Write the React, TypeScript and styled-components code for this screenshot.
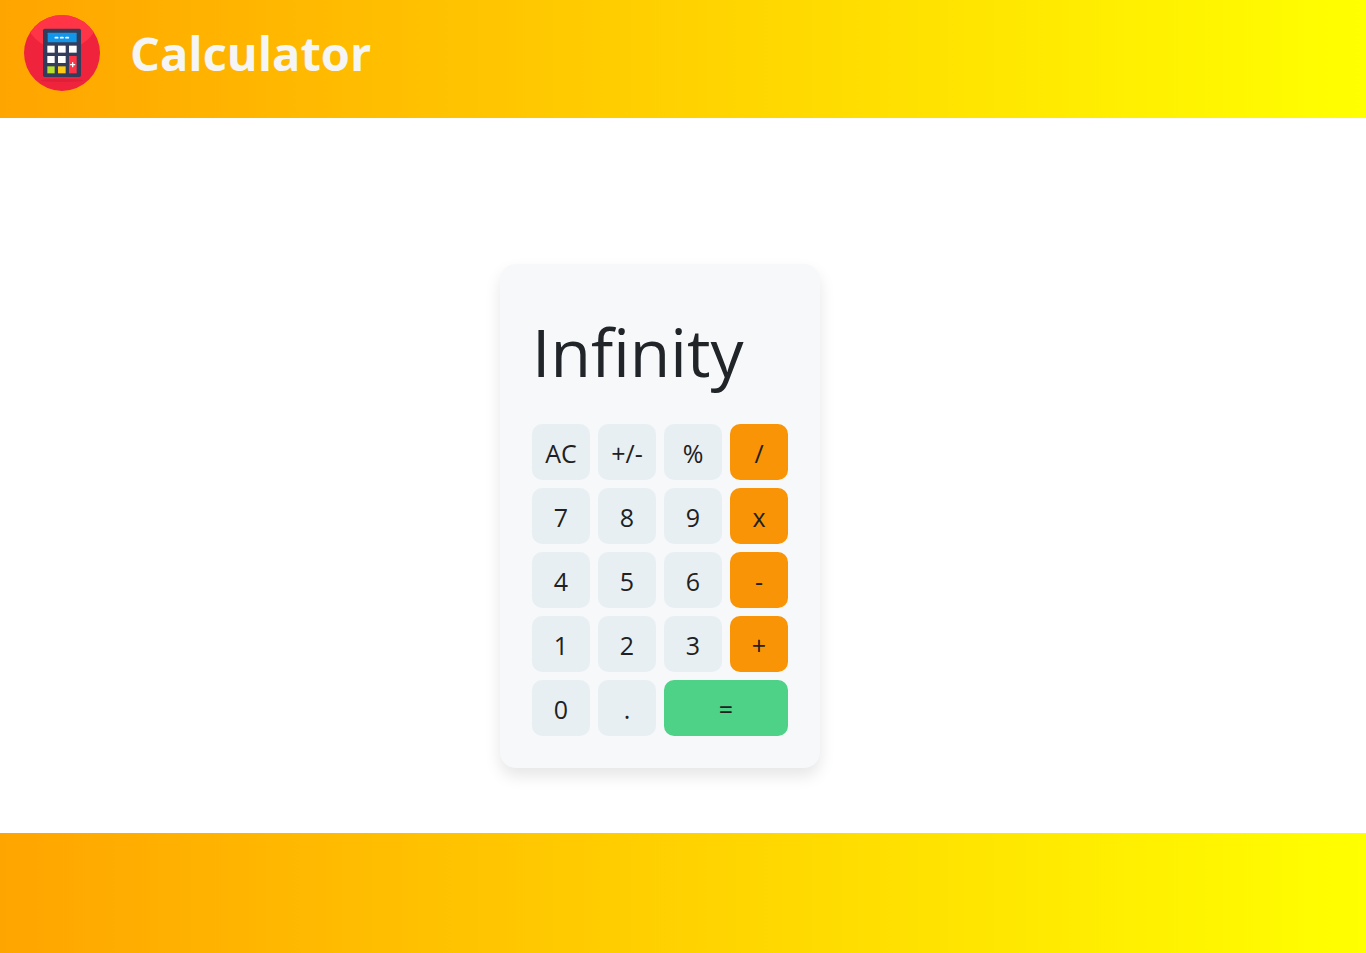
import React, { useState } from 'react';
import styled, { createGlobalStyle } from 'styled-components';

const GlobalStyle = createGlobalStyle`
  *, *::before, *::after { box-sizing: border-box; }
  body {
    margin: 0;
    background: #ffffff;
    color: #212529;
    font-family: 'Segoe UI', 'Open Sans', 'Noto Sans', sans-serif;
  }
`;

const Page = styled.div`
  min-height: 100vh;
  display: flex;
  flex-direction: column;
`;

const Header = styled.header`
  display: flex;
  align-items: flex-start;
  gap: 30px;
  padding: 15px 24px 27px;
  background: linear-gradient(to right, orange, yellow);
`;

const Logo = styled.svg`
  width: 76px;
  height: 76px;
  flex: none;
`;

const Title = styled.h1`
  margin: 0;
  color: #f5f5f5;
  font-size: 47px;
  font-weight: 700;
  line-height: 76px;
`;

const Main = styled.main`
  flex: 1;
  display: flex;
  justify-content: center;
  align-items: flex-start;
  padding: 146px 46px 64px 0;
`;

const Card = styled.section`
  width: 320px;
  padding: 32px;
  border-radius: 16px;
  background: #f7f8fa;
  box-shadow: 0 8px 16px rgba(0, 0, 0, 0.1);
`;

const Display = styled.output`
  display: block;
  height: 128px;
  font-size: 66px;
  line-height: 110px;
  white-space: nowrap;
  overflow: hidden;
`;

const Keypad = styled.div`
  display: grid;
  grid-template-columns: repeat(4, 1fr);
  grid-auto-rows: 56px;
  gap: 8px;
`;

type Tone = 'plain' | 'operator' | 'equals';

const toneColor: Record<Tone, string> = {
  plain: '#e8eff3',
  operator: '#f99406',
  equals: '#4dd287',
};

const Key = styled.button<{ $tone: Tone }>`
  grid-column: span ${({ $tone }) => ($tone === 'equals' ? 2 : 1)};
  padding: 2px 0 0;
  border: 0;
  border-radius: 10px;
  background: ${({ $tone }) => toneColor[$tone]};
  color: #212121;
  font-family: inherit;
  font-size: 25px;
  font-weight: 400;
  line-height: 32px;
  cursor: pointer;
`;

const Footer = styled.footer`
  height: 120px;
  background: linear-gradient(to right, orange, yellow);
`;

const keys: { label: string; tone: Tone }[] = [
  { label: 'AC', tone: 'plain' },
  { label: '+/-', tone: 'plain' },
  { label: '%', tone: 'plain' },
  { label: '/', tone: 'operator' },
  { label: '7', tone: 'plain' },
  { label: '8', tone: 'plain' },
  { label: '9', tone: 'plain' },
  { label: 'x', tone: 'operator' },
  { label: '4', tone: 'plain' },
  { label: '5', tone: 'plain' },
  { label: '6', tone: 'plain' },
  { label: '-', tone: 'operator' },
  { label: '1', tone: 'plain' },
  { label: '2', tone: 'plain' },
  { label: '3', tone: 'plain' },
  { label: '+', tone: 'operator' },
  { label: '0', tone: 'plain' },
  { label: '.', tone: 'plain' },
  { label: '=', tone: 'equals' },
];

function compute(a: number, b: number, op: string): number {
  if (op === '+') return a + b;
  if (op === '-') return a - b;
  if (op === 'x') return a * b;
  return a / b;
}

function CalculatorLogo() {
  return (
    <Logo viewBox="0 0 228 228" aria-hidden="true">
      <defs>
        <clipPath id="disc">
          <circle cx="114" cy="114" r="114" />
        </clipPath>
      </defs>
      <circle cx="114" cy="114" r="114" fill="#ef233c" />
      <circle cx="114" cy="-10" r="114" fill="#ff3547" clipPath="url(#disc)" />
      <ellipse cx="114" cy="196" rx="64" ry="5" fill="#dd2038" />
      <rect x="57" y="41" width="114" height="145" rx="5" fill="#343c5c" />
      <rect x="71" y="53" width="87" height="29" rx="2" fill="#1296ea" />
      <path d="M94 68h7M110 68h7M126 68h7" stroke="#fff" strokeWidth="5" strokeLinecap="round" />
      <g fill="#fff">
        <rect x="70" y="92" width="22" height="21" />
        <rect x="102" y="92" width="23" height="21" />
        <rect x="135" y="92" width="23" height="21" />
        <rect x="70" y="123" width="22" height="21" />
        <rect x="102" y="123" width="23" height="21" />
      </g>
      <rect x="70" y="154" width="22" height="21" fill="#b7e12d" />
      <rect x="102" y="154" width="23" height="21" fill="#fccb12" />
      <rect x="135" y="123" width="23" height="52" fill="#ff3547" />
      <path d="M140 149h12M146 143v12" stroke="#fff" strokeWidth="4" strokeLinecap="round" />
    </Logo>
  );
}

export default function App() {
  const [display, setDisplay] = useState('Infinity');
  const [stored, setStored] = useState<number | null>(null);
  const [operator, setOperator] = useState('');
  const [fresh, setFresh] = useState(true);

  const press = (label: string) => {
    if (/^[0-9.]$/.test(label)) {
      if (label === '.' && !fresh && display.includes('.')) return;
      setDisplay(fresh ? (label === '.' ? '0.' : label) : display + label);
      setFresh(false);
    } else if (label === 'AC') {
      setDisplay('0');
      setStored(null);
      setOperator('');
      setFresh(true);
    } else if (label === '+/-') {
      setDisplay(String(-Number(display)));
    } else if (label === '%') {
      setDisplay(String(Number(display) / 100));
    } else {
      const current = Number(display);
      const value = operator && stored !== null ? compute(stored, current, operator) : current;
      setDisplay(String(value));
      setStored(label === '=' ? null : value);
      setOperator(label === '=' ? '' : label);
      setFresh(true);
    }
  };

  return (
    <>
      <GlobalStyle />
      <Page>
        <Header>
          <CalculatorLogo />
          <Title>Calculator</Title>
        </Header>
        <Main>
          <Card>
            <Display>{display}</Display>
            <Keypad>
              {keys.map(({ label, tone }) => (
                <Key key={label} type="button" $tone={tone} onClick={() => press(label)}>
                  {label}
                </Key>
              ))}
            </Keypad>
          </Card>
        </Main>
        <Footer />
      </Page>
    </>
  );
}
